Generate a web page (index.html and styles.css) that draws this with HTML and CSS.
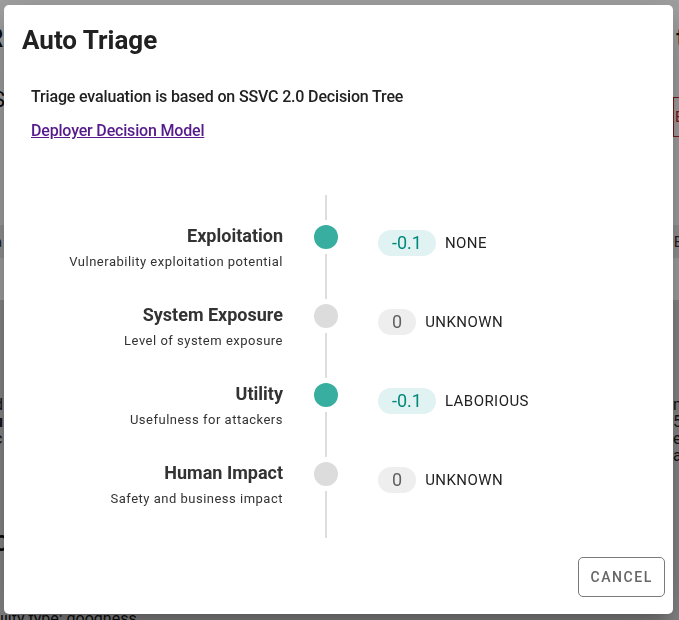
FILE: index.html
```html
<!DOCTYPE html>
<html lang="en">
<head>
<meta charset="utf-8">
<title>Auto Triage</title>
<link rel="stylesheet" href="styles.css">
</head>
<body>
<div class="page">
  <header class="page-head">
    <span class="page-title">R</span>
    <span class="page-title">t</span>
  </header>
  <div class="page-sub">
    <span class="page-status">S</span>
    <span class="page-flag">E</span>
  </div>
  <div class="page-bar">
    <span>a</span>
    <span>B</span>
  </div>
  <div class="page-gap"></div>
  <div class="page-panel">
    <div class="panel-head">l</div>
    <div class="panel-cols">
      <div class="panel-col">
        <p>d</p>
        <p class="strong">u</p>
        <p>c</p>
        <p>i</p>
      </div>
      <div class="panel-col right">
        <p>n</p>
        <p>5</p>
        <p>e</p>
        <p>a</p>
      </div>
    </div>
    <div class="panel-head second">C</div>
    <div class="panel-foot">ility type: goodness</div>
  </div>
</div>

<div class="backdrop">
  <div class="dialog" role="dialog" aria-labelledby="dlg-title">
    <h2 class="dialog-title" id="dlg-title">Auto Triage</h2>
    <div class="dialog-content">
      <p class="intro">Triage evaluation is based on SSVC 2.0 Decision Tree</p>
      <a class="model-link" href="#">Deployer Decision Model</a>
    </div>

    <div class="timeline">
      <div class="tl-row">
        <div class="tl-text">
          <div class="tl-title">Exploitation</div>
          <div class="tl-sub">Vulnerability exploitation potential</div>
        </div>
        <span class="tl-dot is-active"></span>
        <div class="tl-value">
          <span class="chip chip-teal">-0.1</span>
          <span class="tl-label">NONE</span>
        </div>
      </div>
      <div class="tl-row">
        <div class="tl-text">
          <div class="tl-title">System Exposure</div>
          <div class="tl-sub">Level of system exposure</div>
        </div>
        <span class="tl-dot"></span>
        <div class="tl-value">
          <span class="chip chip-gray">0</span>
          <span class="tl-label">UNKNOWN</span>
        </div>
      </div>
      <div class="tl-row">
        <div class="tl-text">
          <div class="tl-title">Utility</div>
          <div class="tl-sub">Usefulness for attackers</div>
        </div>
        <span class="tl-dot is-active"></span>
        <div class="tl-value">
          <span class="chip chip-teal">-0.1</span>
          <span class="tl-label">LABORIOUS</span>
        </div>
      </div>
      <div class="tl-row">
        <div class="tl-text">
          <div class="tl-title">Human Impact</div>
          <div class="tl-sub">Safety and business impact</div>
        </div>
        <span class="tl-dot"></span>
        <div class="tl-value">
          <span class="chip chip-gray">0</span>
          <span class="tl-label">UNKNOWN</span>
        </div>
      </div>
    </div>

    <div class="dialog-actions">
      <button class="btn-outline" type="button">CANCEL</button>
    </div>
  </div>
</div>
</body>
</html>
```

FILE: styles.css
```css
html, body {
  margin: 0;
  padding: 0;
  height: 100%;
}

body {
  font-family: Roboto, "Liberation Sans", Arial, sans-serif;
  background: #ffffff;
  overflow: hidden;
  color: #212121;
}

/* ---------- underlying page (behind the modal) ---------- */
.page {
  display: flex;
  flex-direction: column;
  height: 620px;
}

.page-head {
  display: flex;
  justify-content: space-between;
  align-items: flex-start;
  height: 70px;
  padding-top: 22px;
  box-sizing: border-box;
  margin: 0 -6px 0 -13px;
}

.page-title {
  font-size: 26px;
  line-height: 32px;
  font-weight: 500;
  color: #111;
}

.page-sub {
  display: flex;
  justify-content: space-between;
  align-items: flex-start;
  height: 155px;
  margin: 0 -74px 0 -8px;
}

.page-status {
  margin-top: 17px;
  font-size: 22px;
  line-height: 26px;
  color: #111;
}

.page-flag {
  margin-top: 27px;
  width: 80px;
  height: 40px;
  box-sizing: border-box;
  border: 1px solid #c62828;
  padding-left: 1px;
  font-size: 15px;
  line-height: 38px;
  color: #c62828;
}

.page-bar {
  display: flex;
  justify-content: space-between;
  align-items: center;
  height: 33px;
  background: #eaeaea;
  margin: 0 -4px 0 -6px;
  font-size: 15px;
  color: #333;
}

.page-gap {
  height: 42px;
}

.page-panel {
  flex: 1;
  background: #d6d6d6;
  display: flex;
  flex-direction: column;
}

.panel-head {
  margin: 28px 0 0 -6px;
  font-size: 22px;
  font-weight: 700;
  line-height: 24px;
  color: #111;
}

.panel-head.second {
  margin-top: 68px;
}

.panel-cols {
  display: flex;
  justify-content: space-between;
  margin: 44px -3px 0 -6px;
}

.panel-col p {
  margin: 0;
  font-size: 16px;
  line-height: 17px;
  color: #222;
}

.panel-col .strong {
  font-weight: 700;
}

.panel-foot {
  margin-top: auto;
  font-size: 16px;
  line-height: 8px;
  color: #111;
  height: 5px;
  overflow: hidden;
}

/* ---------- modal ---------- */
.backdrop {
  position: fixed;
  inset: 0;
  background: rgba(0, 0, 0, 0.37);
  display: flex;
  align-items: flex-start;
  padding: 5px 6px 0 4px;
}

.dialog {
  flex: 1;
  background: #ffffff;
  border-radius: 5px;
  display: flex;
  flex-direction: column;
  box-shadow: 0 11px 15px -7px rgba(0, 0, 0, 0.2),
              0 24px 38px 3px rgba(0, 0, 0, 0.14),
              0 9px 46px 8px rgba(0, 0, 0, 0.12);
}

.dialog-title {
  margin: 0;
  padding: 19px 18px 0;
  font-size: 26px;
  line-height: 32px;
  font-weight: 700;
  color: #212121;
}

.dialog-content {
  padding: 29px 27px 0;
}

.intro {
  margin: 0;
  font-size: 16px;
  line-height: 24px;
  font-weight: 500;
  letter-spacing: -0.16px;
  color: #212121;
}

.model-link {
  display: block;
  width: max-content;
  margin-top: 10px;
  font-size: 16px;
  line-height: 24px;
  font-weight: 500;
  letter-spacing: -0.18px;
  color: #551a8b;
  text-decoration: underline;
}

/* timeline */
.timeline {
  margin-top: 52px;
  padding: 29px 0;
  display: flex;
  flex-direction: column;
  gap: 31px;
  background: linear-gradient(#dddddd, #dddddd) no-repeat 321px 0 / 2px 100%;
}

.tl-row {
  display: flex;
  align-items: flex-start;
  height: 48px;
}

.tl-text {
  width: 279px;
  flex: none;
  text-align: right;
}

.tl-title {
  font-size: 18px;
  line-height: 24px;
  font-weight: 700;
  color: #333333;
}

.tl-sub {
  margin-top: 4px;
  font-size: 13px;
  line-height: 20px;
  letter-spacing: 0.5px;
  color: #333333;
}

.tl-dot {
  flex: none;
  width: 24px;
  height: 24px;
  margin: 1px 0 0 31px;
  border-radius: 50%;
  background: #dcdcdc;
  box-shadow: 0 0 0 5px #ffffff;
}

.tl-dot.is-active {
  background: #37ae9f;
}

.tl-value {
  display: flex;
  align-items: center;
  gap: 9px;
  margin: 6px 0 0 40px;
}

.chip {
  height: 26px;
  padding: 0 14px;
  border-radius: 13px;
  font-size: 18px;
  line-height: 26px;
}

.chip-teal {
  background: #e0f2f1;
  color: #00897b;
}

.chip-gray {
  background: #eeeeee;
  color: #616161;
}

.tl-label {
  font-size: 15px;
  letter-spacing: 0.45px;
  color: #222222;
}

/* actions */
.dialog-actions {
  display: flex;
  justify-content: flex-end;
  padding: 19px 8px 17px;
}

.btn-outline {
  height: 40px;
  padding: 0 11px 0 11px;
  border: 1px solid #7a7a7a;
  border-radius: 5px;
  background: #ffffff;
  font-family: Roboto, "Liberation Sans", Arial, sans-serif;
  font-size: 14px;
  font-weight: 500;
  letter-spacing: 1.6px;
  color: #666666;
}
```
